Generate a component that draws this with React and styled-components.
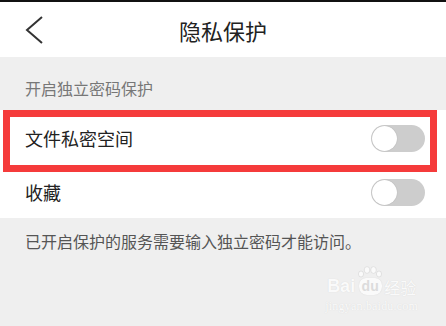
import React from "react";
import styled, { createGlobalStyle } from "styled-components";

const GlobalStyle = createGlobalStyle`
  body {
    margin: 0;
    font-family: "Noto Sans CJK SC", "Noto Sans", sans-serif;
  }
`;

const Screen = styled.div`
  position: relative;
  width: 446px;
  height: 326px;
  background-color: #efefef;
  overflow: hidden;
`;

const TopLine = styled.div`
  height: 2px;
  background-color: #111;
`;

const Header = styled.div`
  display: grid;
  grid-template-columns: 70px 1fr 70px;
  align-items: center;
  height: 55px;
  background-color: #fff;
`;

const BackButton = styled.div`
  display: flex;
  align-items: center;
  padding-left: 24px;
  color: #333;
`;

const Title = styled.div`
  text-align: center;
  font-size: 22px;
  color: #222;
`;

const SectionLabel = styled.div`
  display: flex;
  align-items: flex-end;
  height: 53px;
  box-sizing: border-box;
  padding: 0 0 10px 25px;
  font-size: 16px;
  color: #777;
`;

const List = styled.div`
  background-color: #fff;
`;

const Row = styled.div`
  display: flex;
  align-items: center;
  justify-content: space-between;
  height: ${({ $h }) => $h}px;
  padding: 0 21px 0 25px;
  font-size: 18px;
  color: #222;
`;

const Toggle = styled.div`
  position: relative;
  width: 54px;
  height: 27px;
  border-radius: 14px;
  background-color: #cdcdcd;
`;

const Knob = styled.div`
  position: absolute;
  top: 1px;
  left: 1px;
  width: 25px;
  height: 25px;
  border-radius: 50%;
  background-color: #fff;
  box-shadow: 0 0 1px rgba(0, 0, 0, 0.25);
`;

const Note = styled.div`
  padding: 11px 0 0 25px;
  font-size: 16px;
  color: #555;
`;

const Highlight = styled.div`
  position: absolute;
  left: 3px;
  top: 110px;
  width: 434px;
  height: 62px;
  box-sizing: border-box;
  border: 7px solid #f53b3b;
`;

/* faint baidu jingyan watermark, bottom right */
const Watermark = styled.div`
  position: absolute;
  right: 28px;
  bottom: 12px;
  display: flex;
  flex-direction: column;
  align-items: center;
  color: #fafafa;
  text-shadow: 0 0 1px #d4d4d4;
  font-family: "Liberation Sans", sans-serif;
`;

const Brand = styled.div`
  display: flex;
  align-items: flex-end;
  font-size: 18px;
  font-weight: bold;
  line-height: 1;
`;

const Paw = styled.span`
  position: relative;
  display: flex;
  flex-direction: column;
  align-items: center;
  margin: 0 2px 0 3px;
`;

const PawPad = styled.span`
  padding: 1px 3px 2px;
  border-radius: 7px 7px 8px 8px;
  background-color: #fafafa;
  box-shadow: 0 0 1px #cfcfcf;
  color: #dcdcdc;
  text-shadow: none;
  font-size: 14px;
`;

const Jing = styled.span`
  font-family: "Noto Sans CJK SC", sans-serif;
  font-size: 16px;
  font-weight: normal;
`;

const Domain = styled.div`
  margin-top: 4px;
  font-family: "Liberation Serif", serif;
  font-size: 12px;
  letter-spacing: 0.2px;
`;

const Switch = () => (
  <Toggle>
    <Knob />
  </Toggle>
);

export default function App() {
  return (
    <>
      <GlobalStyle />
      <Screen>
        <TopLine />
        <Header>
          <BackButton>
            <svg width="20" height="28" viewBox="0 0 20 28">
              <path
                d="M18 1 L3 14 L18 27"
                fill="none"
                stroke="#333"
                strokeWidth="2"
              />
            </svg>
          </BackButton>
          <Title>隐私保护</Title>
          <div />
        </Header>
        <SectionLabel>开启独立密码保护</SectionLabel>
        <List>
          <Row $h={56}>
            <span>文件私密空间</span>
            <Switch />
          </Row>
          <Row $h={52}>
            <span>收藏</span>
            <Switch />
          </Row>
        </List>
        <Note>已开启保护的服务需要输入独立密码才能访问。</Note>
        <Highlight />
        <Watermark>
          <Brand>
            Bai
            <Paw>
              <svg width="24" height="12" viewBox="0 0 24 12">
                <g fill="#fafafa" stroke="#d4d4d4" strokeWidth="0.6">
                  <ellipse cx="3" cy="8" rx="2.6" ry="3" />
                  <ellipse cx="9" cy="4" rx="2.8" ry="3.4" />
                  <ellipse cx="15.5" cy="4" rx="2.8" ry="3.4" />
                  <ellipse cx="21" cy="8" rx="2.6" ry="3" />
                </g>
              </svg>
              <PawPad>du</PawPad>
            </Paw>
            <Jing>经验</Jing>
          </Brand>
          <Domain>jingyan.baidu.com</Domain>
        </Watermark>
      </Screen>
    </>
  );
}
